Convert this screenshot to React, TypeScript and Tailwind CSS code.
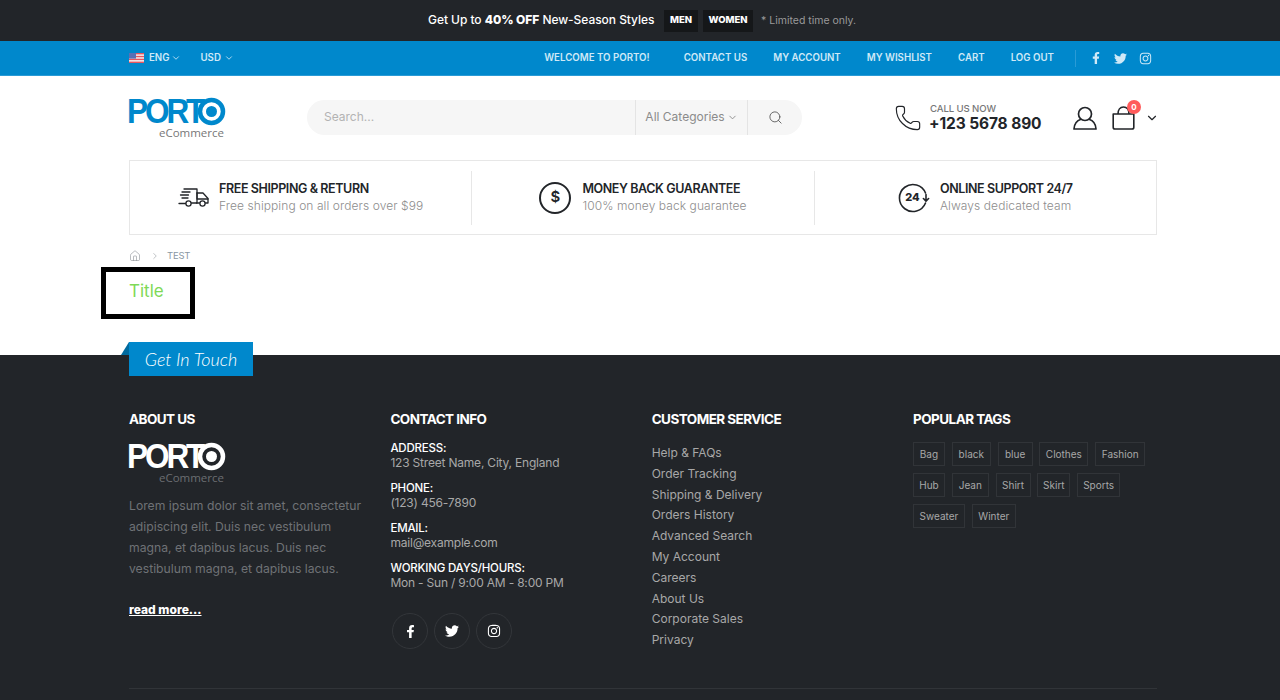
import React from "react";
import { FaFacebookF, FaTwitter, FaInstagram } from "react-icons/fa";
import { ChevronDown, Search, Phone, Home, ChevronRight } from "lucide-react";

function Logo({ white }: { white?: boolean }) {
  const c = white ? "text-white" : "text-[#0088cc]";
  const ring = white ? "#ffffff" : "#0088cc";
  return (
    <div className="w-[97px] h-[40px] flex flex-col">
      <div className={`flex items-center h-[26px] ${c}`}>
        <span className="font-['Liberation_Sans'] font-bold text-[35px] leading-[26px] tracking-[-3.4px] scale-x-[0.9] origin-left w-[69px] ml-[-2px]">PORT</span>
        <svg width="29" height="29" viewBox="0 0 29 29" className="shrink-0 ml-[1px]">
          <circle cx="14.5" cy="14.5" r="11.5" fill="none" stroke={ring} strokeWidth="4.5" />
          <circle cx="14.5" cy="14.5" r="5.5" fill={ring} />
        </svg>
      </div>
      <div className={`font-['Open_Sans'] text-[11.5px] leading-[13px] text-right mt-[2px] pr-[2px] ${white ? "text-[#6b6e72]" : "text-[#777]"}`}>eCommerce</div>
    </div>
  );
}

function Flag() {
  return (
    <svg width="15" height="10" viewBox="0 0 15 10">
      <rect width="15" height="10" fill="#f2f2f2" />
      <rect y="0" width="15" height="1.4" fill="#e8565f" />
      <rect y="2.85" width="15" height="1.4" fill="#e8565f" />
      <rect y="5.7" width="15" height="1.4" fill="#e8565f" />
      <rect y="8.6" width="15" height="1.4" fill="#e8565f" />
      <rect width="7" height="5.6" fill="#5a6fb5" />
    </svg>
  );
}

function Truck() {
  return (
    <svg width="32" height="24" viewBox="0 0 32 24" fill="none" stroke="#222529" strokeWidth="1.3" strokeLinecap="round" strokeLinejoin="round">
      <path d="M6 3h13v14h-5.5" />
      <path d="M19 7h6l5 5.5V17h-2.5" />
      <path d="M21.5 17h-3M19 7v6h11" />
      <circle cx="10.5" cy="17.5" r="2.6" />
      <circle cx="24.5" cy="17.5" r="2.6" />
      <path d="M4 6h8M2.5 9h8M4 12h6M1 17.5h6.5" />
    </svg>
  );
}

function Dollar() {
  return (
    <div className="w-[32px] h-[32px] rounded-full border-2 border-[#222529] flex items-center justify-center font-semibold text-[15px] text-[#222529]">$</div>
  );
}

function Support() {
  return (
    <div className="relative w-[32px] h-[30px] flex items-center justify-center">
      <svg width="32" height="30" viewBox="0 0 32 30" fill="none" stroke="#222529" strokeWidth="1.6" strokeLinecap="round" strokeLinejoin="round" className="absolute inset-0">
        <path d="M27.5 10A13.5 13.5 0 1 0 27.5 20" />
        <path d="M28 11.5v6M25.4 15.5l2.6 2.6 2.6-2.6" />
      </svg>
      <span className="font-extrabold text-[11px] text-[#222529] mr-[3px]">24</span>
    </div>
  );
}

function UserIcon() {
  return (
    <svg width="24" height="24" viewBox="0 0 24 24" fill="none" stroke="#222529" strokeWidth="1.7">
      <circle cx="12" cy="8" r="6.5" />
      <path d="M8 13.2C4 14.5 1.2 18 1 23h22c-.2-5-3-8.5-7-9.8" strokeLinejoin="round" />
    </svg>
  );
}

function CartIcon() {
  return (
    <svg width="24" height="24" viewBox="0 0 24 24" fill="none" stroke="#222529" strokeWidth="1.6" strokeLinejoin="round">
      <path d="M1.2 8h20.6v13.2a1.8 1.8 0 0 1-1.8 1.8H3a1.8 1.8 0 0 1-1.8-1.8z" />
      <path d="M6 8c0-4 2-7 5.5-7S17 4 17 8" />
    </svg>
  );
}

function InfoItem({ icon, title, sub, iconGap }: { icon: React.ReactNode; title: string; sub: string; iconGap: string }) {
  return (
    <div className="flex-1 flex items-center justify-center border-r border-[#e7e7e7] last:border-r-0 h-[54px]">
      <div className={`shrink-0 ${iconGap}`}>{icon}</div>
      <div>
        <div className="text-[12.5px] leading-[16px] font-semibold tracking-[-0.4px] text-[#222529] whitespace-nowrap">{title}</div>
        <div className="text-[12px] leading-[17px] font-light text-[#8d8d8d] tracking-[0.08px] whitespace-nowrap">{sub}</div>
      </div>
    </div>
  );
}

const links = ["Help & FAQs", "Order Tracking", "Shipping & Delivery", "Orders History", "Advanced Search", "My Account", "Careers", "About Us", "Corporate Sales", "Privacy"];
const tagRows = [
  [
    { t: "Bag", w: "w-[32px]" },
    { t: "black", w: "w-[39px]" },
    { t: "blue", w: "w-[35px]" },
    { t: "Clothes", w: "w-[49px]" },
    { t: "Fashion", w: "w-[50px]" },
  ],
  [
    { t: "Hub", w: "w-[32px]" },
    { t: "Jean", w: "w-[37px]" },
    { t: "Shirt", w: "w-[35px]" },
    { t: "Skirt", w: "w-[33px]" },
    { t: "Sports", w: "w-[43px]" },
  ],
  [
    { t: "Sweater", w: "w-[52px]" },
    { t: "Winter", w: "w-[44px]" },
  ],
];

function FooterTitle({ children }: { children: React.ReactNode }) {
  return <h4 className="text-[13.5px] leading-[20px] font-bold tracking-[-0.55px] text-white">{children}</h4>;
}

function Contact({ label, value, mt }: { label: string; value: string; mt: string }) {
  return (
    <div className={mt}>
      <div className="text-[11.5px] leading-[14px] font-medium tracking-[-0.2px] text-white">{label}</div>
      <div className="text-[12px] leading-[15px] tracking-[-0.2px] text-[#a8a8a8]">{value}</div>
    </div>
  );
}

export default function App() {
  return (
    <div className="font-['Inter'] w-[1280px] h-[700px] overflow-hidden bg-white">
      <div className="h-[41px] bg-[#222529] flex items-center pl-[428px]">
        <span className="mb-[2px] w-[227px] text-[12px] font-medium tracking-[-0.05px] text-white whitespace-nowrap">Get Up to <b className="font-extrabold">40% OFF</b> New-Season Styles</span>
        <span className="ml-[9px] h-[22px] w-[34px] bg-[#151719] flex items-center justify-center text-[9.5px] font-extrabold text-white">MEN</span>
        <span className="ml-[5px] h-[22px] w-[50px] bg-[#151719] flex items-center justify-center text-[9.5px] font-extrabold text-white">WOMEN</span>
        <span className="ml-[8px] text-[10.5px] text-[#9a9a9a]">* Limited time only.</span>
      </div>

      <div className="h-[35px] bg-[#0088cc] border-b border-[#2a9bd6]">
        <div className="ml-[129px] w-[1028px] h-full flex items-center justify-between text-[9.7px] font-semibold text-[#cfe9f7]">
          <div className="flex items-center">
            <Flag />
            <span className="ml-[5px]">ENG</span>
            <ChevronDown size={10} className="ml-[2px]" />
            <span className="ml-[19px]">USD</span>
            <ChevronDown size={10} className="ml-[3px]" />
          </div>
          <div className="flex items-center">
            <span>WELCOME TO PORTO!</span>
            <span className="ml-[34px]">CONTACT US</span>
            <span className="ml-[26px]">MY ACCOUNT</span>
            <span className="ml-[26px]">MY WISHLIST</span>
            <span className="ml-[26px]">CART</span>
            <span className="ml-[26px]">LOG OUT</span>
            <span className="ml-[21px] mr-[14px] w-px h-[17px] bg-[#2a9bd6]" />
            <FaFacebookF size={12} />
            <FaTwitter size={13} className="ml-[12px]" />
            <FaInstagram size={13} className="ml-[12px]" />
            <span className="w-[5px]" />
          </div>
        </div>
      </div>

      <div className="ml-[129px] w-[1028px]">
        <div className="h-[84px] flex items-center">
          <Logo />
          <div className="ml-[81px] mb-[2px] w-[495px] h-[35px] rounded-full bg-[#f6f6f6] flex items-center text-[12px] text-[#b3b3b3]">
            <span className="flex-1 pl-[17px]">Search...</span>
            <div className="h-full w-[112px] border-l border-[#e4e4e4] flex items-center justify-center text-[#8b8b8b]">
              All Categories<ChevronDown size={11} className="ml-[2px]" />
            </div>
            <div className="h-full w-[55px] border-l border-[#e4e4e4] flex items-center pl-[20px] pr-[1px] text-[#555]">
              <Search size={15} strokeWidth={1.4} />
            </div>
          </div>
          <div className="ml-auto flex items-center">
            <Phone size={28} strokeWidth={1} className="text-[#222529] mr-[8px]" />
            <div className="mb-[1px] w-[111px]">
              <div className="text-[9.6px] leading-[11px] font-medium tracking-[-0.1px] text-[#777]">CALL US NOW</div>
              <div className="text-[15.5px] leading-[19px] font-bold text-[#222529] tracking-[-0.1px] ml-[-1px] whitespace-nowrap">+123 5678 890</div>
            </div>
            <div className="ml-[32px]"><UserIcon /></div>
            <div className="relative ml-[15px]">
              <CartIcon />
              <span className="absolute -top-[6px] right-[-5px] w-[14px] h-[14px] rounded-full bg-[#ff5b5b] flex items-center justify-center text-[8px] font-bold text-white">0</span>
            </div>
            <ChevronDown size={14} strokeWidth={2} className="text-[#222529] ml-[9px] mr-[-2px]" />
          </div>
        </div>

        <div className="h-[75px] border border-[#e7e7e7] flex items-center">
          <InfoItem icon={<Truck />} title="FREE SHIPPING & RETURN" sub="Free shipping on all orders over $99" iconGap="mr-[9px]" />
          <InfoItem icon={<Dollar />} title="MONEY BACK GUARANTEE" sub="100% money back guarantee" iconGap="mr-[11px]" />
          <InfoItem icon={<Support />} title="ONLINE SUPPORT 24/7" sub="Always dedicated team" iconGap="mr-[10px]" />
        </div>

        <div className="h-[32px] flex items-center pt-[10px] text-[#8a8f94]">
          <Home size={12} strokeWidth={1.2} />
          <ChevronRight size={10} strokeWidth={1.3} className="ml-[9px]" />
          <span className="ml-[7px] text-[9.5px] tracking-[-0.2px] text-[#8a97a3]">TEST</span>
        </div>
      </div>

      <div className="h-[88px] pl-[101px]">
        <div className="w-[94px] h-[52px] border-[5px] border-black pl-[23px] pt-[7px] text-[17px] leading-[24px] text-[#7ed957]">Title</div>
      </div>

      <footer className="h-[345px] bg-[#222529] relative">
        <div className="absolute left-[129px] top-[-13px] w-[124px] h-[34px] bg-[#0088cc] flex items-center justify-center font-['Lato'] font-light italic text-[18px] text-white">
          Get In Touch
          <span className="absolute left-[-8px] top-0 w-0 h-0 border-l-[8px] border-l-transparent border-b-[13px] border-b-[#006a9e]" />
        </div>
        <div className="ml-[129px] w-[1028px] pt-[54px] grid grid-cols-[261.4px_261.3px_261.3px_1fr]">
          <div className="pr-[24px]">
            <FooterTitle>ABOUT US</FooterTitle>
            <div className="mt-[14px]"><Logo white /></div>
            <p className="mt-[12px] text-[12.2px] leading-[21px] text-[#6f7276]">Lorem ipsum dolor sit amet, consectetur adipiscing elit. Duis nec vestibulum magna, et dapibus lacus. Duis nec vestibulum magna, et dapibus lacus.</p>
            <div className="mt-[21px] text-[12px] leading-[20px] font-extrabold text-white underline">read more...</div>
          </div>
          <div>
            <FooterTitle>CONTACT INFO</FooterTitle>
            <Contact mt="mt-[12px]" label="ADDRESS:" value="123 Street Name, City, England" />
            <Contact mt="mt-[11px]" label="PHONE:" value="(123) 456-7890" />
            <Contact mt="mt-[11px]" label="EMAIL:" value="mail@example.com" />
            <Contact mt="mt-[11px]" label="WORKING DAYS/HOURS:" value="Mon - Sun / 9:00 AM - 8:00 PM" />
            <div className="mt-[23px] ml-[2px] flex gap-[6px]">
              {[<FaFacebookF size={13} />, <FaTwitter size={14} />, <FaInstagram size={14} />].map((ic, i) => (
                <div key={i} className="w-[36px] h-[36px] rounded-full border border-[#33363a] flex items-center justify-center text-white">{ic}</div>
              ))}
            </div>
          </div>
          <div>
            <FooterTitle>CUSTOMER SERVICE</FooterTitle>
            <div className="mt-[14px] flex flex-col">
              {links.map((l) => (
                <span key={l} className="text-[12px] leading-[20.8px] text-[#a8a8a8]">{l}</span>
              ))}
            </div>
          </div>
          <div>
            <FooterTitle>POPULAR TAGS</FooterTitle>
            <div className="mt-[13px] flex flex-col gap-[7px]">
              {tagRows.map((row, i) => (
                <div key={i} className="flex gap-[6.8px]">
                  {row.map(({ t, w }) => (
                    <span key={t} className={`${w} h-[24px] border border-[#313438] flex items-center justify-center text-[10px] text-[#a8a8a8]`}>{t}</span>
                  ))}
                </div>
              ))}
            </div>
          </div>
        </div>
        <div className="absolute left-[129px] top-[333px] w-[1028px] h-px bg-[#313438]" />
      </footer>
    </div>
  );
}
